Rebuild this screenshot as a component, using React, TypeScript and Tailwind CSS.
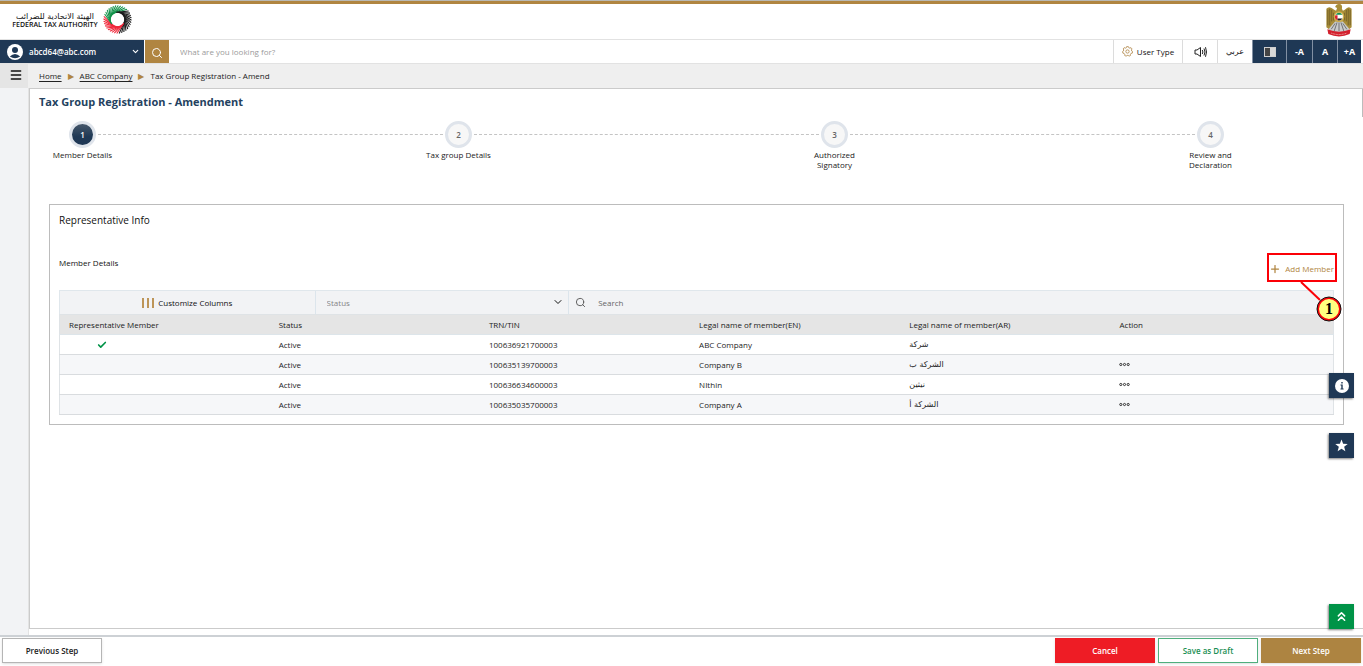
import { useState } from 'react';
import { Check, ChevronDown, ChevronsUp, Menu, Plus, Search } from 'lucide-react';
import clsx from 'clsx';

interface Member {
  trn: string;
  nameEn: string;
  nameAr: string;
  representative?: boolean;
}

const members: Member[] = [
  { trn: '100636921700003', nameEn: 'ABC Company', nameAr: 'شركة', representative: true },
  { trn: '100635139700003', nameEn: 'Company B', nameAr: 'الشركة ب' },
  { trn: '100636634600003', nameEn: 'NIthin', nameAr: 'نيثين' },
  { trn: '100635035700003', nameEn: 'Company A', nameAr: 'الشركة أ' },
];

const columns = [
  'Representative Member',
  'Status',
  'TRN/TIN',
  'Legal name of member(EN)',
  'Legal name of member(AR)',
  'Action',
];

const steps = ['Member Details', 'Tax group Details', 'Authorized\nSignatory', 'Review and\nDeclaration'];

/** Ring of overlapping strokes in the flag colours */
function RingLogo() {
  const strokes = Array.from({ length: 36 }, (_, i) => {
    const angle = (i / 36) * Math.PI * 2;
    const end = angle + 1.1;
    const deg = ((i / 36) * 360 + 50) % 360;
    let color = '#f0283a';
    if (deg >= 190 && deg < 310) color = '#12924a';
    else if (deg >= 310 || deg < 80) color = '#1c1c1c';
    return {
      color,
      x1: 15 + Math.cos(angle) * 7.5,
      y1: 15 + Math.sin(angle) * 7.5,
      x2: 15 + Math.cos(end) * 14.5,
      y2: 15 + Math.sin(end) * 14.5,
    };
  });

  return (
    <svg viewBox="0 0 30 30" className="h-[29px] w-[29px]" aria-hidden="true">
      {strokes.map((s, i) => (
        <line key={i} x1={s.x1} y1={s.y1} x2={s.x2} y2={s.y2} stroke={s.color} strokeWidth="1.1" />
      ))}
    </svg>
  );
}

/** Falcon emblem */
function Emblem() {
  return (
    <svg viewBox="0 0 26 34" className="h-[33px] w-[26px]" aria-label="Emblem" role="img">
      <path d="M0 5 Q3 1 8 6 L10 7 L11 4 L9 3 Q10 0 13 0 Q17 0 16 5 L17 7 L19 6 Q23 1 26 5 L26 24 L22 27 L4 27 L0 24Z" fill="#a88d38" />
      <path d="M1.500 6v16M3.500 5v17M5.500 6v12M7.500 9v8M24.500 6v16M22.500 5v17M20.500 6v12M18.500 9v8" stroke="#5d4e22" strokeWidth="0.7" />
      <path d="M9 18h8l7 8-5 3H7l-5-3z" fill="#c9cbcb" />
      <path d="M9 20l-4 6M11 19l-3 9M13 19v9M15 19l3 9M17 20l4 6" stroke="#55575b" strokeWidth="0.8" />
      <circle cx="13" cy="13" r="5.500" fill="#cfae4a" />
      <circle cx="13" cy="13" r="4" fill="#fff" />
      <path d="M9.600 11a4 4 0 0 1 6.800 0z" fill="#0d8d4b" />
      <path d="M9.200 11.500h2.300v5.200a4 4 0 0 1-2.300-5.200z" fill="#dc2430" />
      <path d="M11.500 15h5a4 4 0 0 1-5 1.700z" fill="#222" />
      <path d="M1 26 Q13 31 25 26 L24 31 Q13 36 2 31Z" fill="#d3202d" />
      <path d="M5 30Q13 33 21 30" fill="none" stroke="#f0b9b4" strokeWidth="0.9" strokeDasharray="1 0.6" />
    </svg>
  );
}

function GearIcon() {
  return (
    <svg viewBox="0 0 12 12" className="h-[11px] w-[11px]" fill="none" stroke="#a97a35" strokeWidth="0.8">
      <path d="M5 .7h2l.4 1.200 1.200.5 1.200-.6 1.100 1.400-.6 1.100.3 1.200 1 .6-.4 1.700-1.300.2-.7 1 .1 1.300-1.600.8-1-.9H5.500l-1 .9-1.600-.8.1-1.300-.8-1-1.200-.2L.6 6.100l1-.6.300-1.200-.6-1.100 1.100-1.400 1.200.6 1.100-.5z" />
      <circle cx="6" cy="6" r="1.800" />
    </svg>
  );
}

function SpeakerIcon() {
  return (
    <svg viewBox="0 0 13 12" className="h-3 w-[13px]" fill="none" stroke="#222" strokeWidth="1" aria-hidden="true">
      <path d="M1 4h2l3.500-2.500v9L3 8H1zM8.300 4q1.200 2 0 4M10 2.500q2 3.500 0 7M11.500 1.200q2 4.800 0 9.600" />
    </svg>
  );
}

function TopHeader() {
  return (
    <header className="flex h-[39px] items-start justify-between border-t border-[#b9b9b4] bg-white">
      <div className="flex w-full items-start justify-between border-t-[3px] border-[#b08541] pl-[11px] pr-[11px]">
        <div className="flex items-center gap-1 pt-px">
          <div className="w-[88px] pt-[2px] text-center">
            <div dir="rtl" className="whitespace-nowrap font-['DejaVu_Sans',sans-serif] text-[8px] leading-[9px]">
              الهيئة الاتحادية للضرائب
            </div>
            <div className="whitespace-nowrap text-[7px] font-semibold leading-[8px]">FEDERAL TAX AUTHORITY</div>
          </div>
          <RingLogo />
        </div>
        <Emblem />
      </div>
    </header>
  );
}

function NavBar() {
  const darkButton = 'flex items-center justify-center border-l border-[#8290a3] bg-[#1f3855] text-[9px] font-bold text-white';
  const lightButton = 'flex items-center justify-center border-l border-[#dcdcdc] bg-white';

  return (
    <nav className="flex h-[25px] border-y border-[#e2e2e2] bg-white">
      <button className="flex w-[144px] items-center bg-[#1f3855] pl-[7px] pr-1 text-[8px] font-semibold text-white">
        <svg viewBox="0 0 16 16" className="mr-[6px] h-4 w-4" aria-hidden="true">
          <circle cx="8" cy="8" r="8" fill="#fff" />
          <circle cx="8" cy="6" r="3" fill="#1f3855" />
          <path d="M2.800 12.500Q8 7.500 13.200 12.500Q8 16 2.800 12.500Z" fill="#1f3855" />
        </svg>
        abcd64@abc.com
        <ChevronDown className="ml-auto h-[9px] w-[9px]" strokeWidth={3} />
      </button>
      <button aria-label="Search" className="ml-px flex w-6 items-center justify-center bg-[#b08541] pt-[2px] text-white">
        <Search className="h-3 w-3" />
      </button>
      <input
        aria-label="Site search"
        placeholder="What are you looking for?"
        className="min-w-0 flex-1 pl-[11px] text-[8px] text-gray-700 outline-none placeholder:text-[#9b9b9b]"
      />
      <button className={clsx(lightButton, 'w-[69px] gap-1 text-[8px] font-medium')}>
        <GearIcon />
        User Type
      </button>
      <button aria-label="Read aloud" className={clsx(lightButton, 'w-[35px]')}>
        <SpeakerIcon />
      </button>
      <button className={clsx(lightButton, "w-[35px] font-['DejaVu_Sans',sans-serif] text-[8px]")}>عربي</button>
      <button aria-label="Contrast" className={clsx(darkButton, 'w-[34px]')}>
        <span className="flex h-[10px] w-3 border border-[#cfcfcf] bg-[#d8d8d8]">
          <span className="w-[5px] bg-[#444]" />
        </span>
      </button>
      <button className={clsx(darkButton, 'w-[26px]')}>-A</button>
      <button className={clsx(darkButton, 'w-[25px]')}>A</button>
      <button className={clsx(darkButton, 'mr-[2px] w-[24px]')}>+A</button>
    </nav>
  );
}

function Breadcrumbs() {
  return (
    <div className="flex h-6 bg-[#efefef]">
      <button aria-label="Menu" className="flex w-7 items-center justify-center bg-[#e5e5e5] pl-1 pb-[2px]">
        <Menu className="h-[14px] w-[14px]" strokeWidth={2.5} />
      </button>
      <div className="flex items-center gap-[6px] pl-[11px] text-[8px] font-medium text-[#222]">
        <a href="#home" className="underline underline-offset-2">Home</a>
        <span className="text-[8px] text-[#b08541]">▶</span>
        <a href="#company" className="underline underline-offset-2">ABC Company</a>
        <span className="text-[8px] text-[#b08541]">▶</span>
        <span>Tax Group Registration - Amend</span>
      </div>
    </div>
  );
}

function Stepper({ current }: { current: number }) {
  return (
    <ol className="flex pl-[39px] pr-[139px] pt-3">
      {steps.map((label, i) => (
        <li key={label} className={clsx('flex', i > 0 && 'flex-1')}>
          {i > 0 && <span className="mx-[2px] mt-[13px] h-px flex-1 border-t border-dashed border-[#c4c4c4]" />}
          <div className="flex w-[27px] flex-col items-center">
            <span
              className={clsx(
                'flex h-[27px] w-[27px] shrink-0 items-center justify-center rounded-full border-[3px] border-[#dfe4eb] text-[8px] font-semibold',
                i === current ? 'bg-linear-to-b from-[#46586b] to-[#1f3855] to-60% text-white' : 'bg-[#f7f7f7] text-[#666]'
              )}
            >
              {i + 1}
            </span>
            <span className="mt-[2px] whitespace-pre text-center text-[8px] leading-[10px] text-[#222]">{label}</span>
          </div>
        </li>
      ))}
    </ol>
  );
}

function AddMember() {
  return (
    <div className="relative flex">
      <button className="flex items-center gap-1 text-[8px] font-medium text-[#b08541]">
        <Plus className="h-3 w-3" strokeWidth={2.5} />
        Add Member
      </button>
      {/* Callout marker */}
      <svg className="pointer-events-none absolute -right-[9px] -top-[11px] z-10 h-[70px] w-[77px]" viewBox="0 0 77 70">
        <rect x="2" y="2" width="68" height="27" fill="none" stroke="#fb0007" strokeWidth="2" />
        <path d="M35 30 L54 48" stroke="#fb0007" strokeWidth="2" />
        <circle cx="63" cy="57" r="11" fill="#ffff80" stroke="#fb0007" strokeWidth="2" />
        <circle cx="63" cy="57" r="12" fill="none" stroke="#111" strokeWidth="1" />
        <text x="63" y="62" textAnchor="middle" className="font-['Liberation_Serif',serif] text-[16px] font-bold">1</text>
      </svg>
    </div>
  );
}

function MembersTable() {
  return (
    <table className="w-full table-fixed border border-[#dfe3e6] text-left text-[8px] font-medium text-[#1c1c1c]">
      <thead>
        <tr className="h-5 border-b border-[#dde5ea] bg-[#e5e5e5]">
          {columns.map((name) => (
            <th key={name} className={clsx('pl-[9px] font-medium', name !== 'Action' && 'w-[16.5%]')}>{name}</th>
          ))}
        </tr>
      </thead>
      <tbody>
        {members.map((member) => (
          <tr key={member.trn} className="h-5 border-b border-[#d9dcdf] even:bg-[#f6f7f9]">
            <td className="pl-[37px]">
              {member.representative && <Check className="h-[10px] w-[10px] text-[#009347]" strokeWidth={4} aria-label="Yes" />}
            </td>
            <td className="pl-[9px]">Active</td>
            <td className="pl-[9px]">{member.trn}</td>
            <td className="pl-[9px]">{member.nameEn}</td>
            <td className="pl-[9px] font-['DejaVu_Sans',sans-serif]">{member.nameAr}</td>
            <td className="pl-[8px]">
              {!member.representative && (
                <button aria-label={`Actions for ${member.nameEn}`} className="flex">
                  <svg viewBox="0 0 11 5" className="h-[5px] w-[11px]" fill="none" stroke="#222" strokeWidth="0.9">
                    <circle cx="1.800" cy="2.500" r="1.100" />
                    <circle cx="5.500" cy="2.500" r="1.100" />
                    <circle cx="9.200" cy="2.500" r="1.100" />
                  </svg>
                </button>
              )}
            </td>
          </tr>
        ))}
      </tbody>
    </table>
  );
}

function RepresentativeInfo() {
  const [query, setQuery] = useState('');

  return (
    <section className="ml-[19px] mr-[19px] mt-[34px] border border-[#bcbcbc] px-[9px] pb-[9px] pt-2">
      <h2 className="text-[10px] font-medium leading-[14px]">Representative Info</h2>
      <h3 className="mt-[30px] text-[8px] font-medium leading-[12px]">Member Details</h3>
      <div className="-mt-[6px] flex justify-end">
        <AddMember />
      </div>
      <div className="mt-[15px] flex h-6 border border-b-0 border-[#e0e7ec] bg-[#f2f3f5]">
        <button className="flex w-1/5 items-center justify-center gap-1 text-[8px] font-medium">
          <span className="flex h-[10px] gap-[3px]">
            <span className="w-[2px] bg-[#bd9558]" />
            <span className="w-[2px] bg-[#bd9558]" />
            <span className="w-[2px] bg-[#bd9558]" />
          </span>
          Customize Columns
        </button>
        <div className="relative flex w-1/5 border-x border-[#dce5ec]">
          <select aria-label="Status" className="w-full appearance-none bg-transparent pl-[11px] text-[8px] text-[#858585]">
            <option>Status</option>
          </select>
          <ChevronDown className="pointer-events-none absolute right-1 top-[5px] h-3 w-3" strokeWidth={2} />
        </div>
        <label className="flex flex-1 items-center pl-[6px]">
          <Search className="h-[11px] w-[11px] text-[#555]" strokeWidth={2} />
          <input
            aria-label="Search members"
            placeholder="Search"
            value={query}
            onChange={(e) => setQuery(e.target.value)}
            className="ml-3 flex-1 bg-transparent text-[8px] outline-none placeholder:text-[#666]"
          />
        </label>
      </div>
      <MembersTable />
    </section>
  );
}

function Footer() {
  const base = 'h-[25px] w-[100px] text-[8px] font-semibold shadow-sm';

  return (
    <footer className="flex h-[31px] gap-[3px] border-t-2 border-[#cdd1d5] bg-white px-[2px] pt-px">
      <button className={clsx(base, 'mr-auto border border-[#b5b5b5] text-[#222]')}>Previous Step</button>
      <button className={clsx(base, 'bg-[#ee1c25] text-white')}>Cancel</button>
      <button className={clsx(base, 'border border-[#4fae7d] text-[#1b8f54]')}>Save as Draft</button>
      <button className={clsx(base, 'bg-[#ad8441] text-white')}>Next Step</button>
    </footer>
  );
}

function FloatingActions() {
  const tile = 'absolute right-[9px] flex h-[25px] w-[25px] items-center justify-center text-white shadow-[-1px_1px_2px_rgba(0,0,0,0.5)]';

  return (
    <>
      <button aria-label="Information" className={clsx(tile, 'top-[373px] bg-[#1f3855]')}>
        <svg viewBox="0 0 14 14" className="h-[14px] w-[14px]" aria-hidden="true">
          <circle cx="7" cy="7" r="7" fill="#fff" />
          <path d="M6.300 3h1.400v1.400H6.300zM5.500 5.500h2.200v4h.9v1H5.500v-1h.8v-3h-.8z" fill="#1f3855" />
        </svg>
      </button>
      <button aria-label="Favourites" className={clsx(tile, 'top-[433px] bg-[#1f3855]')}>
        <svg viewBox="0 0 24 24" className="h-[13px] w-[13px]" aria-hidden="true">
          <path d="M12 1l3 7.800 8.500.4-6.600 5.300 2.200 8.200L12 18.100l-7.100 4.600 2.200-8.200L.5 9.200 9 8.800z" fill="#fff" />
        </svg>
      </button>
      <button aria-label="Back to top" className={clsx(tile, 'bottom-[37px] bg-[#009347]')}>
        <ChevronsUp className="h-[15px] w-[15px]" strokeWidth={2.5} />
      </button>
    </>
  );
}

export default function App() {
  return (
    <div className="relative flex min-h-screen flex-col bg-white font-['Open_Sans','Liberation_Sans',sans-serif] text-[#111]">
      <TopHeader />
      <NavBar />
      <Breadcrumbs />
      <div className="flex flex-1">
        <aside className="w-[29px] border-r border-[#e3e3e3] bg-[#f2f3f5]" />
        <main className="relative mb-[6px] flex-1 border-y border-l border-[#cbcbcb]">
          {/* Scroll thumb */}
          <span className="absolute right-0 top-0 h-7 w-px bg-[#bcbcbc]" />
          <h1 className="pl-[9px] pt-[6px] text-[11px] font-bold leading-[14px] text-[#24425f]">
            Tax Group Registration - Amendment
          </h1>
          <Stepper current={0} />
          <RepresentativeInfo />
        </main>
      </div>
      <Footer />
      <FloatingActions />
    </div>
  );
}
